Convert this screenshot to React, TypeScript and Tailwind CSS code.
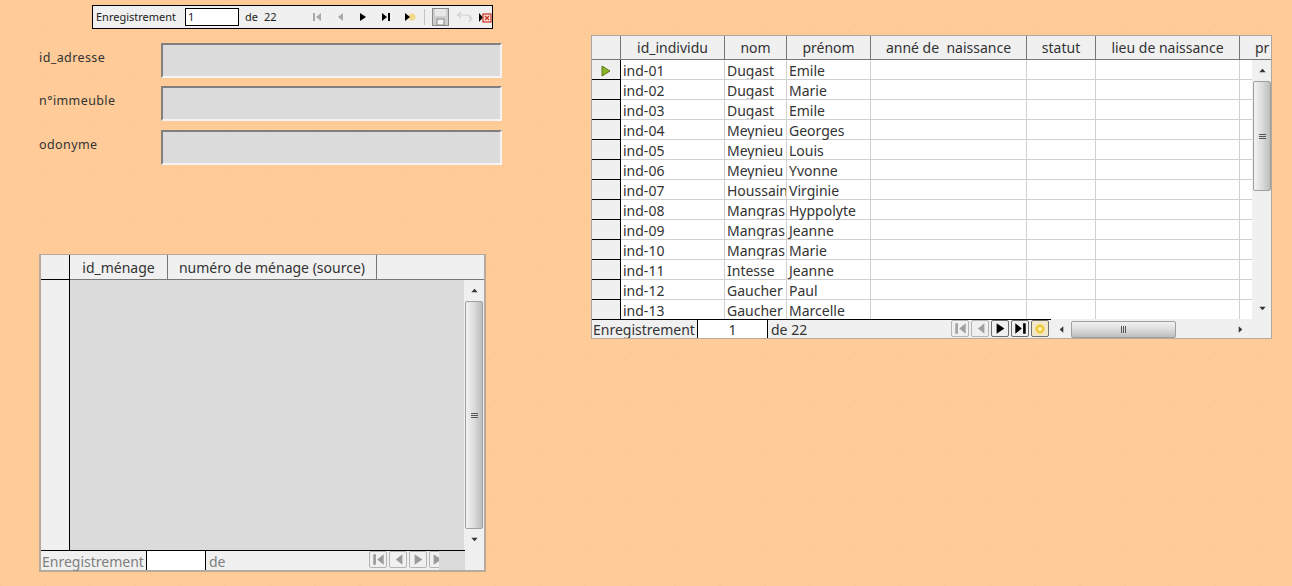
import React from "react";

const rows: [string, string, string][] = [
  ["ind-01", "Dugast", "Emile"],
  ["ind-02", "Dugast", "Marie"],
  ["ind-03", "Dugast", "Emile"],
  ["ind-04", "Meynieu", "Georges"],
  ["ind-05", "Meynieu", "Louis"],
  ["ind-06", "Meynieu", "Yvonne"],
  ["ind-07", "Houssain", "Virginie"],
  ["ind-08", "Mangras", "Hyppolyte"],
  ["ind-09", "Mangras", "Jeanne"],
  ["ind-10", "Mangras", "Marie"],
  ["ind-11", "Intesse", "Jeanne"],
  ["ind-12", "Gaucher", "Paul"],
  ["ind-13", "Gaucher", "Marcelle"],
];

const Tri = ({ d, c = "#000", w = 10, h = 10 }: { d: string; c?: string; w?: number; h?: number }) => (
  <svg width={w} height={h} viewBox="0 0 10 10" className="block shrink-0">
    <path d={d} fill={c} />
  </svg>
);

const FIRST = "M1 1h2v8H1zM9 1v8L4 5z";
const PREV = "M8 1v8L3 5z";
const NEXT = "M2 1v8l6-4z";
const LAST = "M1 1v8l5-4zM7 1h2v8H7z";

function NavBtn({ d, c, dark, w = 18 }: { d: string; c: string; dark?: boolean; w?: number }) {
  const clipped = w < 18;
  return (
    <div
      className={`flex h-[17px] shrink-0 items-center overflow-hidden rounded-[2px] border bg-[#f0f0f0] ${dark ? "border-[#707070]" : "border-[#b4b4b4]"} ${clipped ? "justify-start rounded-r-none border-r-0 pl-px" : "justify-center"}`}
      style={{ width: w }}
    >
      <Tri d={d} c={c} w={13} h={13} />
    </div>
  );
}

function Field({ label, top }: { label: string; top: string }) {
  return (
    <div className={`flex items-center ${top}`}>
      <span className="box-content w-[122px] pb-1 pl-[39px] text-[12.5px] leading-none tracking-[0.4px] text-[#333]">{label}</span>
      <div className="h-[35px] w-[341px] border-2 border-t-[#808080] border-r-[#f4f4f4] border-b-[#f4f4f4] border-l-[#808080] bg-[#dbdbdb]" />
    </div>
  );
}

function VScroll({ h, thumbH }: { h: string; thumbH: string }) {
  return (
    <div className={`flex w-5 shrink-0 flex-col items-center bg-[#f0f0f0] ${h}`}>
      <div className="flex h-[21px] shrink-0 items-center justify-center">
        <Tri d="M5 3l3.5 4h-7z" c="#333" w={9} h={9} />
      </div>
      <div className={`flex w-[18px] shrink-0 items-center justify-center rounded-[2px] border border-[#a0a0a0] bg-gradient-to-r from-[#f2f2f2] via-[#dcdcdc] to-[#bdbdbd] ${thumbH}`}>
        <div className="flex w-[7px] flex-col gap-px">
          <div className="h-px bg-[#555]" />
          <div className="h-px bg-[#555]" />
          <div className="h-px bg-[#555]" />
        </div>
      </div>
      <div className="mt-auto flex h-[21px] shrink-0 items-center justify-center">
        <Tri d="M1.5 3h7L5 7z" c="#333" w={9} h={9} />
      </div>
    </div>
  );
}

function Toolbar() {
  return (
    <div className="ml-[92px] mt-[5px] flex h-[24px] w-[401px] items-center border border-black bg-[#f0f0f0] pl-[3px] text-[11px] text-[#222]">
      <span className="w-[89px] shrink-0">Enregistrement</span>
      <div className="flex h-[18px] w-[54px] shrink-0 items-center border border-black bg-white pl-0.5">1</div>
      <span className="ml-[6px] w-[19px] shrink-0">de</span>
      <span className="w-[48px] shrink-0">22</span>
      <div className="flex w-[112px] shrink-0 items-center gap-[13px]">
        <Tri d={FIRST} c="#a8a8a8" />
        <Tri d={PREV} c="#a8a8a8" />
        <Tri d={NEXT} />
        <Tri d={LAST} />
        <svg width="12" height="10" viewBox="0 0 12 10" className="block">
          <circle cx="8" cy="5" r="3.5" fill="#f3d98a" />
          <path d="M1 1v8l5-4z" fill="#000" />
        </svg>
      </div>
      <div className="h-4 w-px shrink-0 bg-[#c4c4c4]" />
      <svg width="17" height="18" viewBox="0 0 17 18" className="ml-[7px] block shrink-0">
        <rect x="0.5" y="0.5" width="16" height="17" fill="#cfcfcf" stroke="#8a8a8a" />
        <rect x="3" y="1" width="11" height="7" fill="#e8e8e8" />
        <rect x="5" y="11" width="7" height="6" fill="#f2f2f2" stroke="#8a8a8a" />
      </svg>
      <svg width="18" height="12" viewBox="0 0 18 12" className="ml-[7px] block shrink-0" fill="none" stroke="#d0d0d0" strokeWidth="1.2">
        <path d="M5 1L1.5 4 5 7M2 4h9c3 0 4 2 4 4M13 11l2.5-3L13 6" />
      </svg>
      <svg width="13" height="11" viewBox="0 0 13 11" className="ml-[5px] block shrink-0">
        <path d="M0 1v9l4-4.5z" fill="#000" />
        <rect x="4" y="2" width="8" height="8" fill="#fbe3e0" stroke="#c8321e" strokeWidth="1.2" />
        <path d="M6 4l4 4M10 4l-4 4" stroke="#c8321e" strokeWidth="1.2" />
      </svg>
    </div>
  );
}

function LeftGrid() {
  return (
    <div className="ml-[39px] mt-[89px] h-[318px] w-[447px] border-2 border-t border-[#b8aa9a] bg-[#f0f0f0] text-[14px] text-[#333]">
      <div className="flex h-[25px] border-b border-[#777]">
        <div className="-mb-px w-[29px] border-b border-r border-black" />
        <div className="w-[98px] border-r border-[#777] text-center leading-[25px]">id_ménage</div>
        <div className="w-[209px] border-r border-[#777] text-center leading-[25px]">numéro de ménage (source)</div>
      </div>
      <div className="flex h-[270px]">
        <div className="w-[29px] border-r border-black" />
        <div className="w-[395px] bg-[#dbdbdb]" />
        <VScroll h="h-[270px]" thumbH="h-[228px]" />
      </div>
      <div className="flex h-[20px] w-[443px]">
        <div className="flex w-[424px] border-t border-black leading-[21px] text-[#7f7f7f]">
          <span className="w-[105px] pl-px">Enregistrement</span>
          <div className="h-full w-[60px] border-x border-black bg-white" />
          <span className="w-[163px] pl-[3px]">de</span>
          <div className="flex w-[70px] gap-[2px]">
            <NavBtn d={FIRST} c="#9a9a9a" />
            <NavBtn d={PREV} c="#9a9a9a" />
            <NavBtn d={NEXT} c="#9a9a9a" />
            <NavBtn d={NEXT} c="#9a9a9a" w={11} />
          </div>
          <div className="flex-1 bg-[#dbdbdb]" />
        </div>
      </div>
    </div>
  );
}

const colW = ["w-[104px]", "w-[62px]", "w-[84px]", "w-[156px]", "w-[69px]", "w-[144px]"];

function RightGrid() {
  return (
    <div className="mt-[35px] h-[304px] w-[681px] shrink-0 overflow-hidden border border-[#a8a8a8] border-r-[#b0a89e] border-b-[#b8aa9a] bg-[#f0f0f0] text-[14px] text-[#333]">
      <div className="flex h-[24px] border-b border-[#777] text-center leading-[23px]">
        <div className="w-[29px] shrink-0 border-r border-[#777]" />
        {["id_individu", "nom", "prénom", "anné de  naissance", "statut", "lieu de naissance"].map((t, i) => (
          <div key={t} className={`${colW[i]} shrink-0 whitespace-pre border-r border-[#777]`}>{t}</div>
        ))}
        <div className="flex-1 whitespace-nowrap pl-[15px] text-left">pr</div>
      </div>
      <div className="flex h-[259px]">
        <div className="h-[259px] w-[660px] shrink-0 overflow-hidden bg-white">
          {rows.map((r, i) => (
            <div key={r[0]} className="flex h-[20px] text-[14px] leading-[21px] text-[#333]">
              <div className="flex w-[29px] shrink-0 items-center justify-center border-b border-r border-black bg-[#f0f0f0]">
                {i === 0 && (
                  <svg width="10" height="12" viewBox="0 0 10 12" className="mt-[3px] block">
                    <path d="M1 1v10l8-5z" fill="#8cb428" stroke="#5c7a18" />
                  </svg>
                )}
              </div>
              <div className={`${colW[0]} shrink-0 border-b border-r border-[#d0d0d0] pl-0.5`}>{r[0]}</div>
              <div className={`${colW[1]} shrink-0 overflow-hidden whitespace-nowrap border-b border-r border-[#d0d0d0] pl-0.5`}>{r[1]}</div>
              <div className={`${colW[2]} shrink-0 border-b border-r border-[#d0d0d0] pl-0.5`}>{r[2]}</div>
              <div className={`${colW[3]} shrink-0 border-b border-r border-[#d0d0d0]`} />
              <div className={`${colW[4]} shrink-0 border-b border-r border-[#d0d0d0]`} />
              <div className={`${colW[5]} shrink-0 border-b border-r border-[#d0d0d0]`} />
              <div className="flex-1 border-b border-[#d0d0d0]" />
            </div>
          ))}
        </div>
        <VScroll h="h-[259px]" thumbH="h-[110px]" />
      </div>
      <div className="flex h-[20px]">
        <div className="flex w-[459px] shrink-0 border-t border-black leading-[20px]">
          <span className="w-[105px] pl-px">Enregistrement</span>
          <div className="h-full w-[71px] border-x border-black bg-white text-center">1</div>
          <span className="w-[183px] pl-[3px]">de 22</span>
          <div className="flex gap-[2px]">
            <NavBtn d={FIRST} c="#a0a0a0" />
            <NavBtn d={PREV} c="#a0a0a0" />
            <NavBtn d={NEXT} c="#000" dark />
            <NavBtn d={LAST} c="#000" dark />
            <div className="flex h-[17px] w-[18px] items-center justify-center rounded-[2px] border border-[#707070] bg-[#f0e8c8]">
              <svg width="10" height="10" viewBox="0 0 10 10" className="block">
                <circle cx="5" cy="5" r="4.5" fill="#f2c83c" />
                <circle cx="5" cy="5" r="2" fill="#fff2b0" />
              </svg>
            </div>
          </div>
        </div>
        <div className="flex h-[20px] w-[200px] items-center bg-[#f0f0f0]">
          <div className="flex w-[20px] justify-center">
            <Tri d="M3 5l4-3.5v7z" c="#333" w={9} h={9} />
          </div>
          <div className="flex h-[17px] w-[105px] items-center justify-center rounded-[2px] border border-[#a0a0a0] bg-gradient-to-b from-[#f2f2f2] via-[#dcdcdc] to-[#bdbdbd]">
            <div className="flex h-[7px] gap-px">
              <div className="w-px bg-[#555]" />
              <div className="w-px bg-[#555]" />
              <div className="w-px bg-[#555]" />
            </div>
          </div>
          <div className="flex flex-1 justify-end pr-[6px]">
            <Tri d="M3 1.5v7L7 5z" c="#333" w={9} h={9} />
          </div>
        </div>
      </div>
    </div>
  );
}

export default function App() {
  return (
    <div className="flex h-[586px] w-[1292px] overflow-hidden bg-[#ffcc99] [background-image:radial-gradient(circle_at_1px_1px,#fcc896_0.8px,transparent_1.1px),radial-gradient(circle_at_1px_1px,#fcc896_0.8px,transparent_1.1px)] [background-position:0_29px,44px_0] [background-size:8px_47px,45px_8px] [font-family:'Noto_Sans','Open_Sans',sans-serif]">
      <div className="w-[591px] shrink-0">
        <Toolbar />
        <Field label="id_adresse" top="mt-[14px]" />
        <Field label="n°immeuble" top="mt-[8px]" />
        <Field label="odonyme" top="mt-[9px]" />
        <LeftGrid />
      </div>
      <RightGrid />
    </div>
  );
}
